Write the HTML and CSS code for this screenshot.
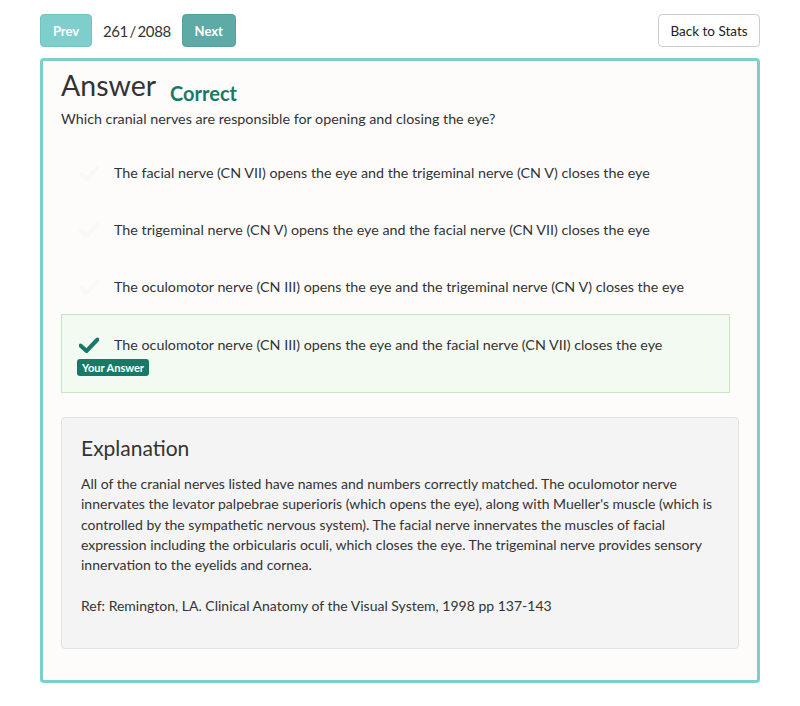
FILE: index.html
```html
<!DOCTYPE html>
<html>
<head>
<meta charset="utf-8">
<link rel="stylesheet" href="styles.css">
</head>
<body>
<div class="page">
  <div class="topbar">
    <button class="btn btn-prev">Prev</button>
    <span class="counter">261 / 2088</span>
    <button class="btn btn-next">Next</button>
    <button class="btn btn-back">Back to Stats</button>
  </div>
  <div class="card">
    <div class="title-row">
      <h1 class="title">Answer</h1>
      <span class="status">Correct</span>
    </div>
    <p class="question">Which cranial nerves are responsible for opening and closing the eye?</p>
    <div class="options">
      <div class="option">
        <div class="option-row">
          <svg class="check" viewBox="0 0 20 16"><path d="M1.5 8.5 L7.5 14 L18.5 2.5" /></svg>
          <span class="option-text">The facial nerve (CN VII) opens the eye and the trigeminal nerve (CN V) closes the eye</span>
        </div>
      </div>
      <div class="option">
        <div class="option-row">
          <svg class="check" viewBox="0 0 20 16"><path d="M1.5 8.5 L7.5 14 L18.5 2.5" /></svg>
          <span class="option-text">The trigeminal nerve (CN V) opens the eye and the facial nerve (CN VII) closes the eye</span>
        </div>
      </div>
      <div class="option">
        <div class="option-row">
          <svg class="check" viewBox="0 0 20 16"><path d="M1.5 8.5 L7.5 14 L18.5 2.5" /></svg>
          <span class="option-text">The oculomotor nerve (CN III) opens the eye and the trigeminal nerve (CN V) closes the eye</span>
        </div>
      </div>
      <div class="option option-selected">
        <div class="option-row">
          <svg class="check" viewBox="0 0 20 16"><path d="M1.5 8.5 L7.5 14 L18.5 2.5" /></svg>
          <span class="option-text">The oculomotor nerve (CN III) opens the eye and the facial nerve (CN VII) closes the eye</span>
        </div>
        <span class="badge">Your Answer</span>
      </div>
    </div>
    <div class="explanation">
      <h2 class="exp-title">Explanation</h2>
      <p class="exp-text">All of the cranial nerves listed have names and numbers correctly matched. The oculomotor nerve innervates the levator palpebrae superioris (which opens the eye), along with Mueller's muscle (which is controlled by the sympathetic nervous system). The facial nerve innervates the muscles of facial expression including the orbicularis oculi, which closes the eye. The trigeminal nerve provides sensory innervation to the eyelids and cornea.</p>
      <p class="exp-ref">Ref: Remington, LA. Clinical Anatomy of the Visual System, 1998 pp 137-143</p>
    </div>
  </div>
</div>
</body>
</html>
```

FILE: styles.css
```css
* { box-sizing: border-box; }
body {
  margin: 0;
  background: #ffffff;
  font-family: Lato, "Open Sans", sans-serif;
  color: #333333;
}
.page {
  padding: 14px 40px 24px 40px;
}
.topbar {
  display: flex;
  align-items: center;
  height: 33px;
}
.btn {
  height: 33px;
  border-radius: 4px;
  font-family: Lato, sans-serif;
  font-size: 13px;
  padding: 0;
  cursor: pointer;
}
.btn-prev {
  width: 52px;
  background: #7ecfcc;
  border: 1px solid #74c3c0;
  color: #ffffff;
  font-weight: 700;
}
.counter {
  font-size: 15px;
  word-spacing: -1.8px;
  letter-spacing: -0.4px;
  margin: 0 11px 0 11px;
  color: #333;
  white-space: nowrap;
}
.btn-next {
  width: 54px;
  background: #5eaaa6;
  border: 1px solid #56a09c;
  color: #ffffff;
  font-weight: 700;
}
.btn-back {
  margin-left: auto;
  width: 102px;
  background: #ffffff;
  border: 1px solid #cccccc;
  color: #222;
  font-size: 13.5px;
}
.card {
  margin-top: 11px;
  border: 3px solid #7ecfcc;
  border-radius: 4px;
  background: #fdfcfb;
  padding: 6px 18px 31px 18px;
}
.title-row {
  display: flex;
  align-items: baseline;
}
.title {
  margin: 0;
  font-size: 28.5px;
  font-weight: 400;
  color: #333;
  line-height: 36px;
}
.status {
  margin-left: 14px;
  font-size: 20px;
  font-weight: 700;
  color: #177a67;
  position: relative;
  top: 5px;
}
.question {
  margin: 6px 0 0 0;
  font-size: 14.3px;
  line-height: 20px;
}
.options {
  margin-top: 13px;
  margin-right: 9px;
}
.option {
  padding: 20px 15px 15px 15px;
  border: 1px solid transparent;
}
.option-row {
  display: flex;
  align-items: center;
}
.check {
  width: 20px;
  height: 16px;
  margin-left: 2px;
  margin-right: 15px;
  fill: none;
  stroke: #f8f8f6;
  stroke-width: 4;
  stroke-linecap: round;
  stroke-linejoin: round;
}
.option-text {
  font-size: 14.3px;
  line-height: 20px;
}
.option-selected {
  margin-top: 1px;
  background: #f3faf1;
  border: 1px solid #c9e6c2;
  padding-bottom: 16px;
}
.option-selected .check {
  stroke: #177a67;
}
.badge {
  display: inline-block;
  margin-top: 4px;
  height: 17px;
  vertical-align: top;
  background: #177a67;
  color: #ffffff;
  font-size: 11px;
  font-weight: 700;
  line-height: 17px;
  padding: 0 5px;
  border-radius: 3px;
}
.option-selected .badge {
  display: block;
  width: fit-content;
}
.explanation {
  margin-top: 24px;
  background: #f4f4f4;
  border: 1px solid #e2e2e2;
  border-radius: 4px;
  padding: 16px 19px 32px 19px;
}
.exp-title {
  margin: 0;
  font-size: 21px;
  font-weight: 400;
  line-height: 28px;
  color: #333;
}
.exp-text {
  margin: 12px 0 0 0;
  font-size: 14px;
  line-height: 20.3px;
}
.exp-ref {
  margin: 21px 0 0 0;
  font-size: 14px;
  line-height: 20px;
}
```
